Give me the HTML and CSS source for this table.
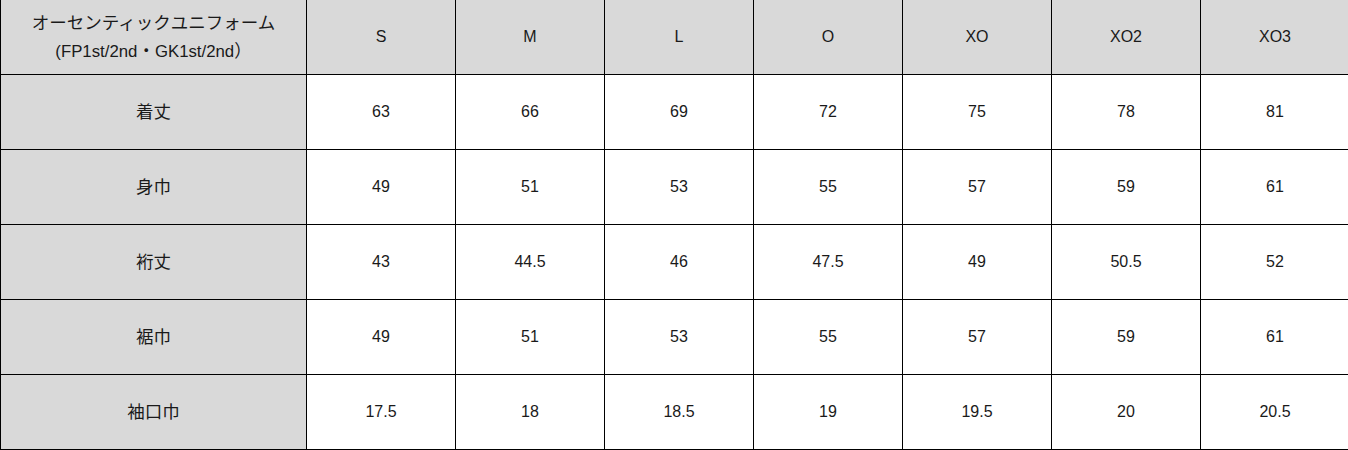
FILE: index.html
```html
<!DOCTYPE html>
<html lang="ja">
<head>
<meta charset="utf-8">
<link rel="stylesheet" href="styles.css">
</head>
<body>
<table class="size-table">
  <colgroup>
    <col class="col-label">
    <col class="col-size"><col class="col-size"><col class="col-size"><col class="col-size"><col class="col-size"><col class="col-size"><col class="col-size">
  </colgroup>
  <thead>
    <tr>
      <th class="label"><span class="ja">オーセンティックユニフォーム</span><br><span class="sub">(FP1st/2nd<span class="ja">・</span>GK1st/2nd<span class="ja">）</span></span></th>
      <th>S</th><th>M</th><th>L</th><th>O</th><th>XO</th><th>XO2</th><th>XO3</th>
    </tr>
  </thead>
  <tbody>
    <tr><th class="label"><span class="ja">着丈</span></th><td>63</td><td>66</td><td>69</td><td>72</td><td>75</td><td>78</td><td>81</td></tr>
    <tr><th class="label"><span class="ja">身巾</span></th><td>49</td><td>51</td><td>53</td><td>55</td><td>57</td><td>59</td><td>61</td></tr>
    <tr><th class="label"><span class="ja">裄丈</span></th><td>43</td><td>44.5</td><td>46</td><td>47.5</td><td>49</td><td>50.5</td><td>52</td></tr>
    <tr><th class="label"><span class="ja">裾巾</span></th><td>49</td><td>51</td><td>53</td><td>55</td><td>57</td><td>59</td><td>61</td></tr>
    <tr><th class="label"><span class="ja">袖口巾</span></th><td>17.5</td><td>18</td><td>18.5</td><td>19</td><td>19.5</td><td>20</td><td>20.5</td></tr>
  </tbody>
</table>
</body>
</html>
```
FILE: styles.css
```css
html, body {
  margin: 0;
  padding: 0;
  background: #ffffff;
}
body {
  font-family: "Liberation Sans", Arial, "Noto Sans CJK JP", sans-serif;
  font-size: 16px;
  color: #1a1a1a;
}
.size-table {
  border-collapse: collapse;
  table-layout: fixed;
  width: 1350px;
}
.col-label { width: 306px; }
.col-size { width: 149px; }
.size-table th,
.size-table td {
  border: 1px solid #000000;
  height: 74px;
  padding: 0;
  text-align: center;
  vertical-align: middle;
  font-weight: normal;
  line-height: 26px;
}
.size-table thead th {
  background: #d9d9d9;
  border-top: none;
}
.size-table th.label {
  background: #d9d9d9;
}
.size-table td {
  background: #ffffff;
}
.sub {
  font-size: 16.8px;
}
.ja {
  font-family: "Noto Sans CJK JP", sans-serif;
  font-size: 17.5px;
}
```
